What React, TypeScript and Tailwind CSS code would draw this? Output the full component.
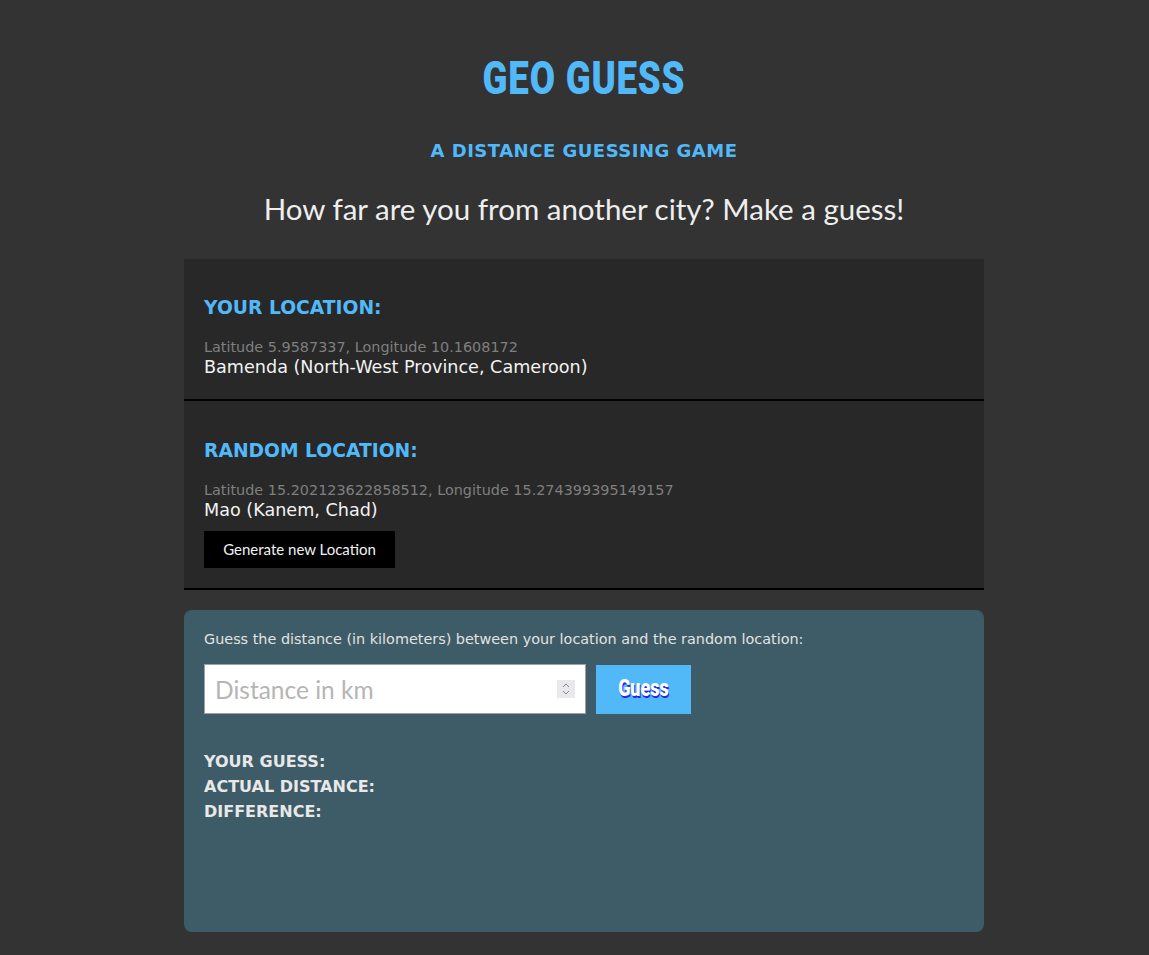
import React from "react";

const display = "[font-family:Roboto,'DejaVu_Sans',sans-serif]";

export default function App() {
  return (
    <div className="min-h-[955px] w-full bg-[#333333] pb-[23px] pl-[19px]">
      <div className="mx-auto flex w-[800px] flex-col items-center pt-[52px]">
        <h1 className={`inline-block scale-x-[0.78] text-[47px] leading-[52px] font-black tracking-[1px] text-[#52b9f9] ${display}`}>
          GEO GUESS
        </h1>
        <h2 className="mt-[35px] text-[18px] leading-[24px] font-bold tracking-[0.5px] text-[#52b9f9] [font-family:'DejaVu_Sans',sans-serif]">
          A DISTANCE GUESSING GAME
        </h2>
        <p className="mt-[28px] text-[29.5px] leading-[36px] text-[#eeeeee] [font-family:Lato,sans-serif]">
          How far are you from another city? Make a guess!
        </p>

        <div className="mt-[32px] w-full [font-family:'DejaVu_Sans',sans-serif]">
          <section className="h-[142px] border-b-2 border-black bg-[#282828] px-5 pt-[37px]">
            <h3 className="text-[18.72px] leading-[24px] font-bold text-[#52b9f9]">YOUR LOCATION:</h3>
            <div className="mt-[19px] text-[14.4px] leading-[17px] text-[#7f7f7f]">Latitude 5.9587337, Longitude 10.1608172</div>
            <div className="text-[17.6px] leading-[22px] text-[#f2f2f2]">Bamenda (North-West Province, Cameroon)</div>
          </section>
          <section className="h-[189px] border-b-2 border-black bg-[#282828] px-5 pt-[38px]">
            <h3 className="text-[18.72px] leading-[24px] font-bold text-[#52b9f9]">RANDOM LOCATION:</h3>
            <div className="mt-[19px] text-[14.4px] leading-[17px] text-[#7f7f7f]">Latitude 15.202123622858512, Longitude 15.274399395149157</div>
            <div className="text-[17.6px] leading-[22px] text-[#f2f2f2]">Mao (Kanem, Chad)</div>
            <button className="mt-[10px] h-[37px] w-[191px] bg-black text-[15px] text-[#f2f2f2] [font-family:Lato,sans-serif]">
              Generate new Location
            </button>
          </section>

          <section className="mt-5 h-[322px] rounded-[8px] bg-[#3e5c67] px-5 pt-[20px]">
            <p className="text-[14.4px] leading-[18px] text-[#e2e2e2]">
              Guess the distance (in kilometers) between your location and the random location:
            </p>
            <div className="mt-[16px] flex items-center gap-[10px]">
              <div className="relative">
                <input
                  type="number"
                  placeholder="Distance in km"
                  className="h-[50px] w-[382px] appearance-none border border-[#a0a0a0] bg-white px-[10px] text-[24.5px] text-[#333] placeholder:text-[#b5b5b5] outline-none [font-family:Lato,sans-serif] [&::-webkit-inner-spin-button]:appearance-none"
                />
                <div className="pointer-events-none absolute top-[16px] right-[11px] flex h-[18px] w-[18px] flex-col items-center justify-center bg-[#e9e9ed]">
                  <svg width="8" height="14" viewBox="0 0 8 14" fill="none" stroke="#8a8a8a" strokeWidth="1">
                    <path d="M1 5 L4 2 L7 5" />
                    <path d="M1 9 L4 12 L7 9" />
                  </svg>
                </div>
              </div>
              <button className="flex h-[49px] w-[95px] items-center justify-center bg-[#52b9f9] text-white">
                <span className={`inline-block scale-x-[0.78] text-[23px] font-black [text-shadow:1px_2px_0_#2424ee] ${display}`}>
                  Guess
                </span>
              </button>
            </div>
            <div className="mt-[35px] flex flex-col text-[16px] leading-[25px] font-bold text-[#e8e8e8]">
              <span>YOUR GUESS:</span>
              <span>ACTUAL DISTANCE:</span>
              <span>DIFFERENCE:</span>
            </div>
          </section>
        </div>
      </div>
    </div>
  );
}
